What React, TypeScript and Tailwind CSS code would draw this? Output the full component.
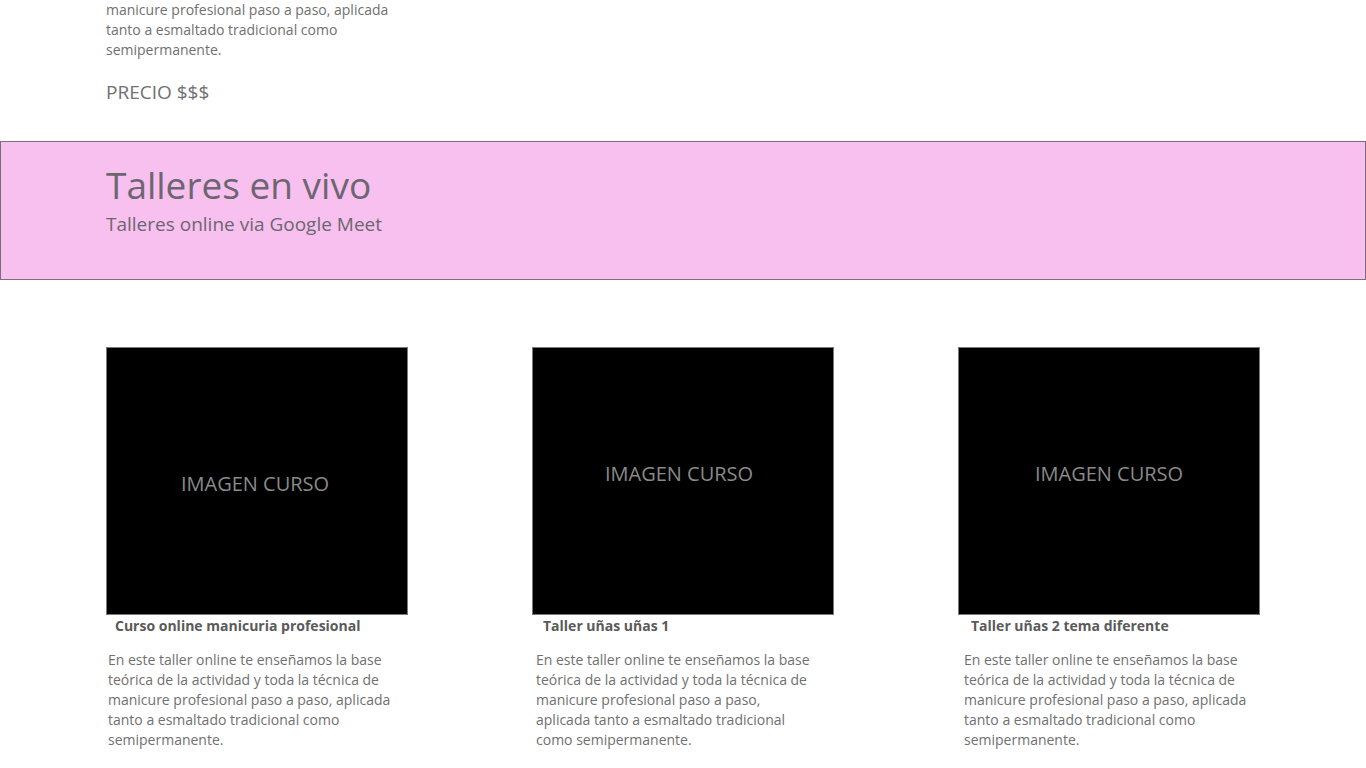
import React from 'react';

const desc =
  'En este taller online te enseñamos la base teórica de la actividad y toda la técnica de manicure profesional paso a paso, aplicada tanto a esmaltado tradicional como semipermanente.';

type Course = {
  title: string;
  labelClass: string;
  titleClass: string;
  textClass: string;
};

const courses: Course[] = [
  {
    title: 'Curso online manicuria profesional',
    labelClass: 'pt-[5px] pr-[4px]',
    titleClass: 'pl-[9px]',
    textClass: 'pl-[2px] w-[300px]',
  },
  {
    title: 'Taller uñas uñas 1',
    labelClass: 'pb-[14px] pr-[8px]',
    titleClass: 'pl-[11px]',
    textClass: 'pl-[4px] w-[282px]',
  },
  {
    title: 'Taller uñas 2 tema diferente',
    labelClass: 'pb-[14px]',
    titleClass: 'pl-[13px]',
    textClass: 'pl-[6px] w-[300px]',
  },
];

const CourseCard = ({ course }: { course: Course }) => {
  return (
    <div className="w-[302px]">
      {/* Image placeholder */}
      <div
        className={`flex h-[268px] w-[302px] items-center justify-center border border-[#7a7a7a] bg-black ${course.labelClass}`}
      >
        <span className="text-[20px] text-[#8a8a8a]">IMAGEN CURSO</span>
      </div>
      <h3 className={`mt-[1px] text-[14px] leading-[20px] font-bold text-[#5a5a5a] ${course.titleClass}`}>
        {course.title}
      </h3>
      <p className={`mt-[14px] text-[14px] leading-[20px] text-[#707070] ${course.textClass}`}>
        {desc}
      </p>
    </div>
  );
};

export default function App() {
  return (
    <div className="min-h-[768px] bg-white font-['Open_Sans',sans-serif] text-[#707070]">
      {/* Previous course, scrolled */}
      <div className="pl-[106px]">
        <p className="w-[300px] text-[14px] leading-[20px]">
          manicure profesional paso a paso, aplicada tanto a esmaltado tradicional como
          semipermanente.
        </p>
        <p className="mt-[19px] text-[19px] leading-[26px]">PRECIO $$$</p>
      </div>

      {/* Banner */}
      <div className="mt-[36px] h-[139px] border border-[#7b6e7a] bg-[#f8c0ef] pl-[105px] pt-[19px]">
        <h2 className="text-[37px] leading-[48px] text-[#6c6670]">Talleres en vivo</h2>
        <p className="mt-[2px] text-[19px] leading-[26px] text-[#6c6670]">Talleres online via Google Meet</p>
      </div>

      {/* Courses */}
      <div className="mt-[67px] flex gap-[124px] pl-[106px]">
        {courses.map((c) => (
          <CourseCard key={c.title} course={c} />
        ))}
      </div>
    </div>
  );
}
